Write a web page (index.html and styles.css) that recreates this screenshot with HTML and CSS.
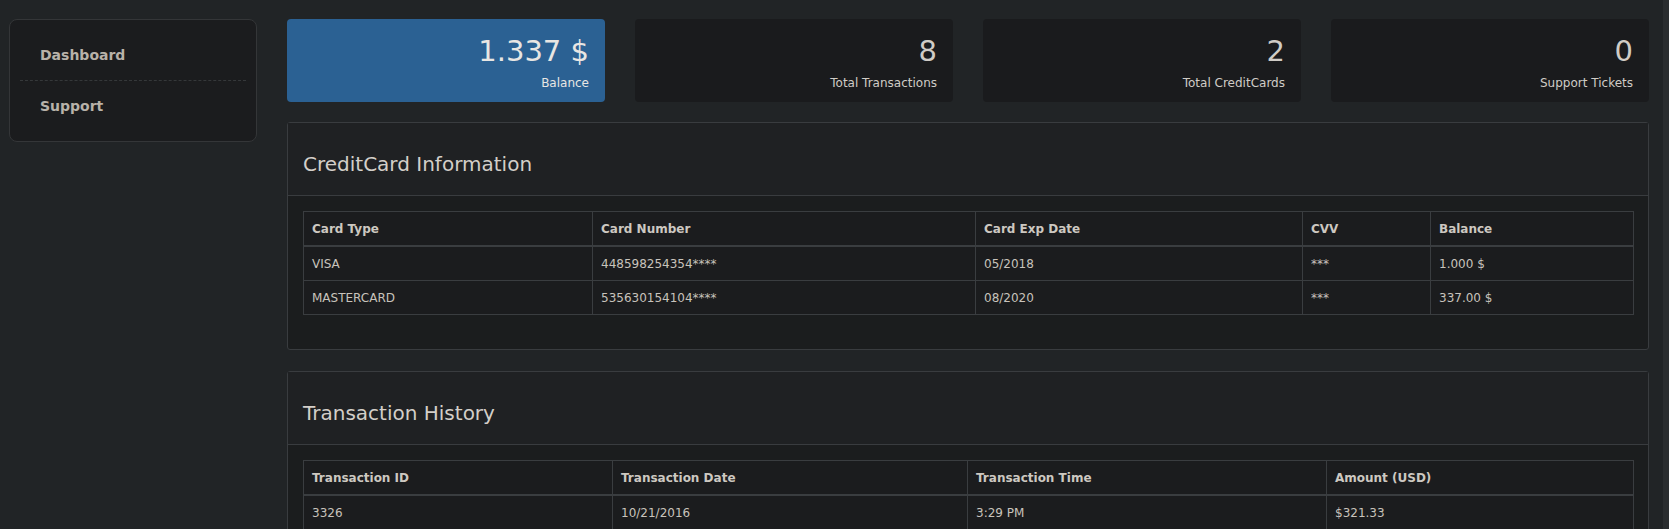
FILE: index.html
```html
<!DOCTYPE html>
<html lang="en">
<head>
<meta charset="utf-8">
<title>Dashboard</title>
<link rel="stylesheet" href="styles.css">
</head>
<body>
<div class="layout">
  <nav class="sidebar">
    <a class="nav-link" href="#">Dashboard</a>
    <a class="nav-link" href="#">Support</a>
  </nav>
  <main class="main">
    <section class="stats">
      <div class="stat stat-primary">
        <div class="stat-value">1.337 $</div>
        <div class="stat-label">Balance</div>
      </div>
      <div class="stat">
        <div class="stat-value">8</div>
        <div class="stat-label">Total Transactions</div>
      </div>
      <div class="stat">
        <div class="stat-value">2</div>
        <div class="stat-label">Total CreditCards</div>
      </div>
      <div class="stat">
        <div class="stat-value">0</div>
        <div class="stat-label">Support Tickets</div>
      </div>
    </section>

    <section class="panel">
      <header class="panel-header"><h2 class="panel-title">CreditCard Information</h2></header>
      <div class="panel-body">
        <table class="data-table">
          <colgroup>
            <col class="c-type"><col class="c-number"><col class="c-exp"><col class="c-cvv"><col class="c-bal">
          </colgroup>
          <thead>
            <tr><th>Card Type</th><th>Card Number</th><th>Card Exp Date</th><th>CVV</th><th>Balance</th></tr>
          </thead>
          <tbody>
            <tr><td>VISA</td><td>448598254354****</td><td>05/2018</td><td>***</td><td>1.000 $</td></tr>
            <tr><td>MASTERCARD</td><td>535630154104****</td><td>08/2020</td><td>***</td><td>337.00 $</td></tr>
          </tbody>
        </table>
      </div>
    </section>

    <section class="panel">
      <header class="panel-header"><h2 class="panel-title">Transaction History</h2></header>
      <div class="panel-body">
        <table class="data-table">
          <colgroup>
            <col class="t-id"><col class="t-date"><col class="t-time"><col class="t-amount">
          </colgroup>
          <thead>
            <tr><th>Transaction ID</th><th>Transaction Date</th><th>Transaction Time</th><th>Amount (USD)</th></tr>
          </thead>
          <tbody>
            <tr><td>3326</td><td>10/21/2016</td><td>3:29 PM</td><td>$321.33</td></tr>
            <tr><td>3327</td><td>10/22/2016</td><td>10:12 AM</td><td>$74.50</td></tr>
            <tr><td>3328</td><td>10/25/2016</td><td>5:47 PM</td><td>$120.00</td></tr>
            <tr><td>3329</td><td>11/02/2016</td><td>1:05 PM</td><td>$48.99</td></tr>
            <tr><td>3330</td><td>11/09/2016</td><td>8:41 AM</td><td>$215.17</td></tr>
            <tr><td>3331</td><td>11/15/2016</td><td>6:23 PM</td><td>$63.00</td></tr>
            <tr><td>3332</td><td>11/28/2016</td><td>2:58 PM</td><td>$99.95</td></tr>
            <tr><td>3333</td><td>12/03/2016</td><td>11:36 AM</td><td>$12.40</td></tr>
          </tbody>
        </table>
      </div>
    </section>
  </main>
</div>
</body>
</html>
```

FILE: styles.css
```css
html {
  overflow: hidden;
}

body {
  margin: 0;
  background: #212426;
  color: #d3cfc9;
  font-family: "DejaVu Sans", "Liberation Sans", sans-serif;
}

body::after {
  content: "";
  position: fixed;
  top: 0;
  right: 0;
  bottom: 0;
  width: 6px;
  background: #2a2d2f;
}

.layout {
  display: flex;
  align-items: flex-start;
  padding: 19px 0 0 9px;
}

/* Sidebar */
.sidebar {
  width: 248px;
  box-sizing: border-box;
  padding: 10px 10px;
  background: #1b1c1e;
  border: 1px solid #343638;
  border-radius: 8px;
  display: flex;
  flex-direction: column;
}

.nav-link {
  display: block;
  height: 50px;
  line-height: 50px;
  padding-left: 20px;
  font-size: 14px;
  font-weight: bold;
  color: #b8b2a9;
  text-decoration: none;
}

.nav-link + .nav-link {
  border-top: 1px dashed #35383a;
}

/* Main */
.main {
  margin-left: 30px;
  width: 1362px;
}

.stats {
  display: grid;
  grid-template-columns: repeat(4, 318px);
  column-gap: 30px;
  margin-bottom: 20px;
}

.stat {
  height: 83px;
  box-sizing: border-box;
  padding: 15px 16px 0;
  background: #1a1b1d;
  border-radius: 4px;
  text-align: right;
  color: #d0ccc6;
}

.stat-primary {
  background: #2b6193;
  color: #e8e6e3;
}

.stat-value {
  font-size: 29px;
  line-height: 35px;
  margin-bottom: 5px;
}

.stat-label {
  font-size: 12px;
  line-height: 18px;
}

/* Panels */
.panel {
  border: 1px solid #393c3f;
  border-radius: 3px;
  background: #1b1d1e;
  margin-bottom: 21px;
}

.panel-header {
  height: 73px;
  box-sizing: border-box;
  padding: 29px 15px 0;
  border-bottom: 1px solid #393c3f;
  background: #1f2123;
}

.panel-title {
  margin: 0;
  font-size: 20px;
  line-height: 24px;
  font-weight: normal;
  color: #d3cfc9;
}

.panel-body {
  padding: 15px;
}

/* Tables */
.data-table {
  width: 100%;
  table-layout: fixed;
  border-collapse: collapse;
  border: 1px solid #3a3d40;
  margin-bottom: 19px;
  font-size: 12px;
  line-height: 17px;
  color: #c8c3bc;
  background: #1b1c1e;
}

.data-table th,
.data-table td {
  border: 1px solid #3a3d40;
  padding: 9px 8px 7px;
  text-align: left;
  white-space: nowrap;
}

.data-table th {
  font-weight: bold;
  border-bottom: 2px solid #3a3d40;
  color: #cdc8c1;
}

.c-type { width: 289px; }
.c-number { width: 383px; }
.c-exp { width: 327px; }
.c-cvv { width: 128px; }
.c-bal { width: 203px; }

.t-id { width: 309px; }
.t-date { width: 355px; }
.t-time { width: 359px; }
.t-amount { width: 307px; }
```
